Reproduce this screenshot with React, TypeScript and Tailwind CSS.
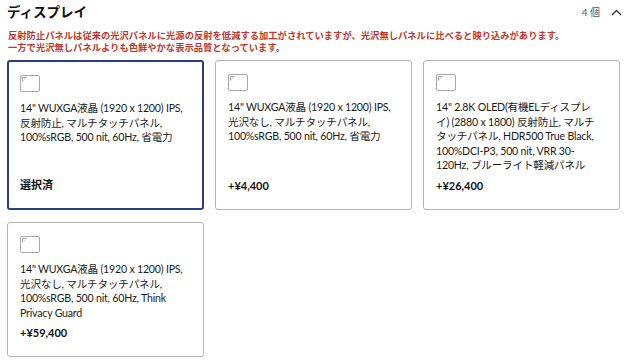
import React from "react";

type Option = {
  id: string;
  desc: string;
  price: string;
  selected?: boolean;
};

const options: Option[] = [
  {
    id: "a",
    desc: "14\" WUXGA液晶 (1920 x 1200) IPS, 反射防止, マルチタッチパネル, 100%sRGB, 500 nit, 60Hz, 省電力",
    price: "選択済",
    selected: true,
  },
  {
    id: "b",
    desc: "14\" WUXGA液晶 (1920 x 1200) IPS, 光沢なし, マルチタッチパネル, 100%sRGB, 500 nit, 60Hz, 省電力",
    price: "+¥4,400",
  },
  {
    id: "c",
    desc: "14\" 2.8K OLED(有機ELディスプレイ) (2880 x 1800) 反射防止, マルチタッチパネル, HDR500 True Black, 100%DCI-P3, 500 nit, VRR 30-120Hz, ブルーライト軽減パネル",
    price: "+¥26,400",
  },
  {
    id: "d",
    desc: "14\" WUXGA液晶 (1920 x 1200) IPS, 光沢なし, マルチタッチパネル, 100%sRGB, 500 nit, 60Hz, Think Privacy Guard",
    price: "+¥59,400",
  },
];

function BrokenImage() {
  return (
    <div className="relative h-[17px] w-[20px] rounded-[2px] border border-[#a8a8a8] bg-white">
      <svg
        className="absolute left-[1px] top-[1px]"
        width="5"
        height="5"
        viewBox="0 0 5 5"
      >
        <path d="M0.5 4.5V0.5H4.5" fill="none" stroke="#9a9a9a" strokeWidth="1" />
        <path d="M1.5 3.5L3.5 1.5" stroke="#c8c8c8" strokeWidth="1" />
      </svg>
    </div>
  );
}

function OptionCard({ opt }: { opt: Option }) {
  return (
    <div
      className={`flex flex-col rounded-[3px] bg-white pb-[16px] pt-[13px] ${
        opt.selected
          ? "border-2 border-[#283f82] pl-[11px] pr-[16px]"
          : "border border-[#b4b4b4] pl-[12px] pr-[17px]"
      }`}
    >
      <BrokenImage />
      <p className="mt-[9px] text-[10.6px] leading-[14.6px] tracking-[-0.2px] text-[#1a1a1a]">
        {opt.desc}
      </p>
      <div className="mt-auto pt-[5px] text-[11px] font-bold leading-[15px] text-[#111]">
        {opt.price}
      </div>
    </div>
  );
}

export default function App() {
  return (
    <div
      className="h-[361px] w-[635px] overflow-hidden bg-white"
      style={{ fontFamily: "Lato, 'Noto Sans CJK JP', sans-serif" }}
    >
      {/* Section header */}
      <div className="flex items-center justify-between pl-[7px] pr-[13px] pt-[4px]">
        <h2 className="text-[13.5px] font-bold leading-[16px] text-[#111]">
          ディスプレイ
        </h2>
        <div className="flex items-center gap-[11px]">
          <span className="text-[10px] text-[#555]">4 個</span>
          <svg width="11" height="7" viewBox="0 0 11 7">
            <path
              d="M1 6L5.5 1.5L10 6"
              fill="none"
              stroke="#333"
              strokeWidth="1.3"
            />
          </svg>
        </div>
      </div>

      {/* Notice */}
      <div className="mt-[10px] pl-[8px] text-[9.3px] font-bold leading-[11.5px] text-[#c0362c]">
        <p>
          反射防止パネルは従来の光沢パネルに光源の反射を低減する加工がされていますが、光沢無しパネルに比べると映り込みがあります。
        </p>
        <p>一方で光沢無しパネルよりも色鮮やかな表示品質となっています。</p>
      </div>

      {/* Options */}
      <div className="mt-[7px] grid grid-cols-[197px_197px_197px] gap-x-[11px] gap-y-[12px] pl-[7px]">
        {options.map((opt) => (
          <OptionCard key={opt.id} opt={opt} />
        ))}
      </div>
    </div>
  );
}
